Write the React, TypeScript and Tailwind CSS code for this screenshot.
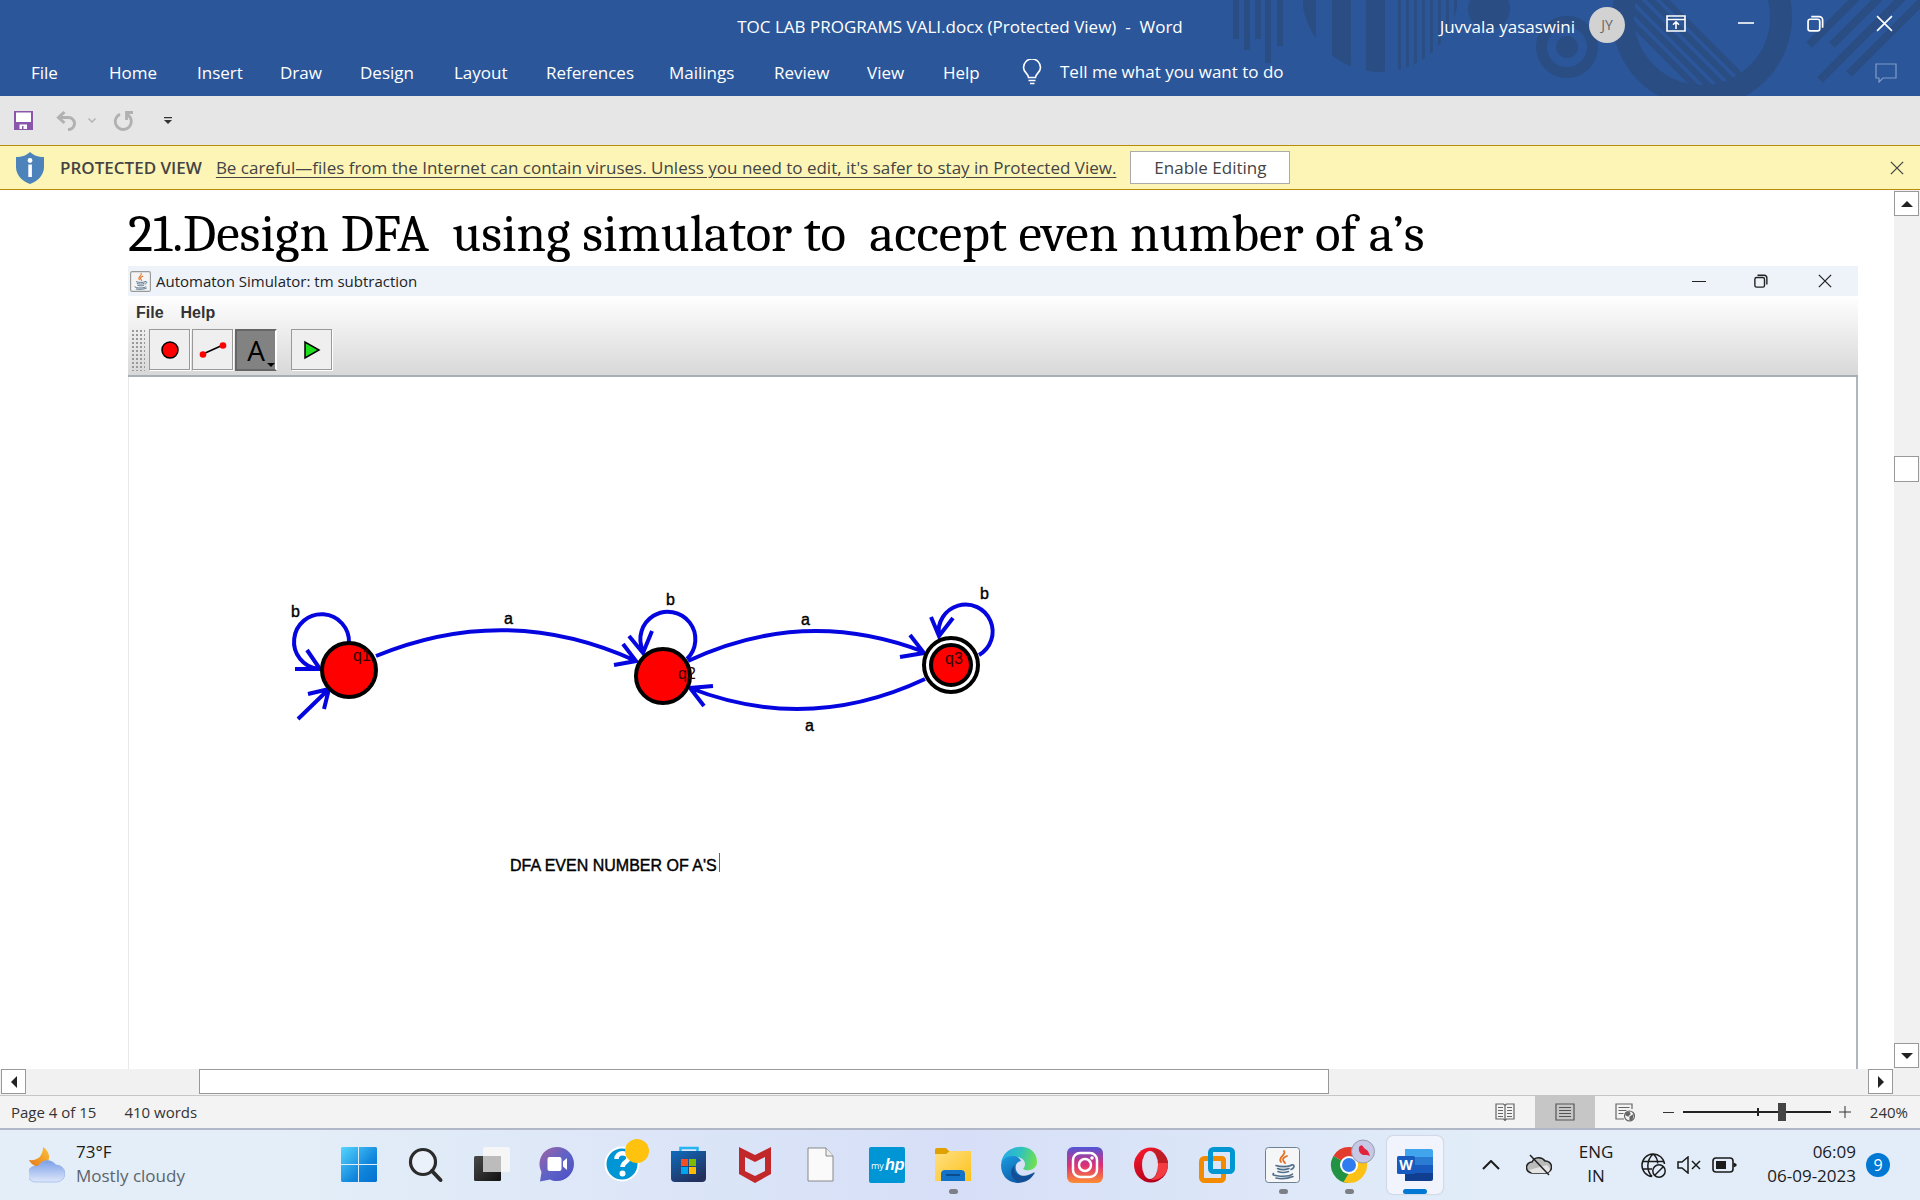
import React from "react";

const ui = "font-['Open_Sans',sans-serif]";

const menu: [string, string][] = [
  ["File", "w-[78px]"],
  ["Home", "w-[88px]"],
  ["Insert", "w-[83px]"],
  ["Draw", "w-[80px]"],
  ["Design", "w-[94px]"],
  ["Layout", "w-[92px]"],
  ["References", "w-[123px]"],
  ["Mailings", "w-[105px]"],
  ["Review", "w-[93px]"],
  ["View", "w-[76px]"],
  ["Help", "w-[79px]"],
];

function HeaderArt() {
  const bars: [number, number][] = [[53, 39], [64, 50], [75, 39], [85, 63], [97, 46]];
  const wide: [number, number][] = [[123, 13], [152, 19], [186, 19], [218, 3], [226, 3], [234, 3], [242, 3], [250, 3], [258, 3], [266, 3], [274, 3]];
  return (
    <svg className="pointer-events-none absolute top-0 right-0" width="740" height="96" viewBox="0 0 740 96" fill="#2a4d83" aria-hidden="true">
      <defs>
        <clipPath id="disc"><circle cx="200" cy="-6" r="78" /></clipPath>
        <clipPath id="hole"><circle cx="522" cy="17" r="69" /></clipPath>
      </defs>
      {bars.map(([x, h]) => <rect key={x} x={x} width="6" height={h} />)}
      <g clipPath="url(#disc)">{wide.map(([x, w]) => <rect key={x} x={x} width={w} height="96" />)}</g>
      <circle cx="309" cy="9" r="21" />
      <circle cx="387" cy="47" r="25.5" fill="none" stroke="#2a4d83" strokeWidth="11" />
      <circle cx="387" cy="47" r="11" />
      <circle cx="522" cy="17" r="79" fill="none" stroke="#2a4d83" strokeWidth="22" />
      <g clipPath="url(#hole)" stroke="#2a4d83" strokeWidth="6">
        {[435, 449, 463, 477, 491].map((x) => <path key={x} d={`M${x - 30} -24l130 130`} />)}
      </g>
      <g stroke="#2a4d83" strokeWidth="8">
        <path d="M629 45 L684 -10M652 45 L707 -10M640 80 L730 -10M669 74 L753 -10" />
      </g>
    </svg>
  );
}

const X = ({ s = 17 }: { s?: number }) => (
  <svg width={s} height={s} viewBox="0 0 16 16" stroke="currentColor" strokeWidth="1.5" fill="none"><path d="M1 1L15 15M15 1L1 15" /></svg>
);
const Restore = ({ s = 17 }: { s?: number }) => (
  <svg width={s} height={s} viewBox="0 0 16 16" stroke="currentColor" strokeWidth="1.6" fill="none"><rect x="1" y="4" width="11" height="11" rx="2" /><path d="M4 1.5h7.5a3.2 3.2 0 0 1 3.2 3.2V12" /></svg>
);

function Header() {
  return (
    <header className="relative h-24 shrink-0 bg-[#2b579a] text-[17px] text-white">
      <HeaderArt />
      <div className="relative grid h-[50px] grid-cols-[1fr_auto_1fr] items-center">
        <span />
        <h1 className="pt-1 whitespace-pre">TOC LAB PROGRAMS VALI.docx (Protected View)  -  Word</h1>
        <div className="flex items-center justify-end pr-[27px]">
          <span className="mr-[14px] pt-1">Juvvala yasaswini</span>
          <span className="mr-[41px] flex size-9 items-center justify-center rounded-full bg-[#d2d2d2] text-sm text-[#666]">JY</span>
          <button aria-label="Ribbon display options" className="mr-[52px] -mt-1">
            <svg width="20" height="17" viewBox="0 0 20 17" fill="none" stroke="white" strokeWidth="1.6"><path d="M1 1h18v15H1zM1 4.5h18M10 14V7M7 9.8l3-3 3 3" /></svg>
          </button>
          <button aria-label="Minimize" className="mr-[53px] -mt-1"><svg width="16" height="16" viewBox="0 0 16 16" stroke="white" strokeWidth="1.6"><path d="M0 8h16" /></svg></button>
          <button aria-label="Restore" className="mr-[52px] -mt-1"><Restore /></button>
          <button aria-label="Close" className="-mt-1"><X /></button>
        </div>
      </div>
      <nav className="relative flex h-[46px] items-center pl-[31px]">
        {menu.map(([m, w]) => <button key={m} className={`text-left ${w}`}>{m}</button>)}
        <button className="flex items-center gap-[18px] pb-[2px]">
          <svg width="20" height="26" viewBox="0 0 20 26" fill="none" stroke="white" strokeWidth="1.6"><path d="M6.5 18.5c0-4-5-5-5-10a8.3 8.3 0 0 1 17 0c0 5-5 6-5 10zM6.5 21.5h7M8 24.5h4.5" /></svg>
          Tell me what you want to do
        </button>
        <button aria-label="Comments" className="mr-[23px] ml-auto">
          <svg width="22" height="20" viewBox="0 0 22 20" fill="none" stroke="#7f9cc8" strokeWidth="1.2"><path d="M1 1h20v14H8l-4 4v-4H1z" /></svg>
        </button>
      </nav>
    </header>
  );
}

function QuickAccess() {
  return (
    <div className="flex h-[49px] shrink-0 items-center bg-[#e6e6e6] pl-[14px]">
      <button aria-label="Save"><svg width="19" height="19" viewBox="0 0 19 19"><path d="M0 0h19v19H0z" fill="#8a56ac" /><path d="M2 1.5h15v9.500H2zM5.500 13.500h7.500V18H9.500v-3H8v3H5.500z" fill="white" /></svg></button>
      <button aria-label="Undo" className="ml-[23px]"><svg width="22" height="20" viewBox="0 0 22 20" fill="none" stroke="#b1b1b1" strokeWidth="3"><path d="M8.500 1L2.500 6.500l6 5.500M3 6.500h9.500a6 6 0 0 1 0 12h-0.500" /></svg></button>
      <button aria-label="Undo history" className="ml-[10px]"><svg width="8" height="5" viewBox="0 0 8 5" fill="none" stroke="#b1b1b1" strokeWidth="1.400"><path d="M.5 .5L4 4 7.500 .5" /></svg></button>
      <button aria-label="Repeat" className="ml-[17px]"><svg width="21" height="20" viewBox="0 0 21 20" fill="none" stroke="#b1b1b1" strokeWidth="2.800"><path d="M7 3.200a8 8 0 1 0 7.500 .5M20 1.500h-6.500V9" /></svg></button>
      <button aria-label="Customize quick access toolbar" className="ml-[30px]"><svg width="8" height="7" viewBox="0 0 8 7" fill="#333"><path d="M0 0h8v1.300H0zM0 3h8L4 7z" /></svg></button>
    </div>
  );
}

function ProtectedBar() {
  return (
    <div className="flex h-[45px] shrink-0 items-center border-y border-[#b98b0b] bg-[#fcf5b5] text-[17px] text-[#444]">
      <svg className="ml-4" width="28" height="32" viewBox="0 0 28 32"><path d="M14 0C11 3 6 5 0 5v10c0 8 6 14 14 17 8-3 14-9 14-17V5C22 5 17 3 14 0z" fill="#4d83bb" /><circle cx="14" cy="8.500" r="2.400" fill="white" /><path d="M12.300 12.500h3.600V25h-3.600z" fill="white" /></svg>
      <strong className="ml-4 font-semibold">PROTECTED VIEW</strong>
      <a href="#protected" className="ml-[14px] underline underline-offset-[3px]">Be careful—files from the Internet can contain viruses. Unless you need to edit, it's safer to stay in Protected View.</a>
      <button className="ml-[14px] h-[33px] w-40 border border-[#ababab] bg-white">Enable Editing</button>
      <button aria-label="Close message bar" className="mr-4 ml-auto"><X s={14} /></button>
    </div>
  );
}

function JavaCup() {
  return (
    <g fill="none" strokeLinecap="round">
      <path d="M19 4c3 4-7 6-3 11M22 9c-5 2-5 4-2 7" stroke="#e76f1f" strokeWidth="1.800" />
      <path d="M11 18.500c4 1.500 11 1.500 15 0M12.500 21.500c3 1.300 8 1.300 11.500 0M13 24.500c3 1.300 7 1.300 10.500 0M26 18c4-1 4 3 0 4.500M8.500 26.500c-4 3 16 4 19 .5M11 31c5 1 12 .5 17-1.500" stroke="#52708c" strokeWidth="1.600" />
    </g>
  );
}

function Diagram() {
  return (
    <svg className="block shrink-0" width="900" height="520" viewBox="129 377 900 520" fontFamily="'Liberation Sans', sans-serif" fontSize="16">
      <g fill="none" stroke="#0505e0" strokeWidth="4">
        <path d="M349 643A27.500 27.500 0 1 0 318 669M295 669h25L307 650" />
        <path d="M298 719L329 689M308 694l21-5-5 20" />
        <path d="M376 656Q507 602 636 661M614 665l22-4-13-17" />
        <path d="M687 659A27.500 27.500 0 1 0 643 651M629 636l14 17 9-22" />
        <path d="M688 661Q805 606 924 652M900 657l24-4-14-18" />
        <path d="M925 679Q808 734 690 688M713 686l-23 2 14 18" />
        <path d="M979 655A27 27 0 1 0 939 636M931 617l8 19 14-18" />
      </g>
      <g stroke="black" strokeWidth="4">
        <circle cx="349" cy="670" r="27" fill="red" />
        <circle cx="663" cy="676" r="27" fill="red" />
        <circle cx="951" cy="665" r="27" fill="white" />
        <circle cx="951" cy="665" r="20" fill="red" />
      </g>
      <g stroke="black" strokeWidth=".4">
        <text x="291" y="617">b</text><text x="504" y="624">a</text><text x="666" y="605">b</text>
        <text x="801" y="625">a</text><text x="805" y="731">a</text><text x="980" y="599">b</text>
        <text x="510" y="871">DFA EVEN NUMBER OF A'S</text>
      </g>
      <g fill="#300"><text x="353" y="661">q1</text><text x="678" y="679">q2</text><text x="945" y="664">q3</text></g>
      <path d="M719.500 853v19" stroke="#666" />
    </svg>
  );
}

function Simulator() {
  const tool = "flex size-[41px] items-center justify-center border border-[#999] bg-[#efefef] shadow-[1px_1px_0_white]";
  return (
    <section className="flex min-h-0 flex-1 flex-col">
      <div className="flex h-[30px] shrink-0 items-center bg-[#eef3fa] pl-[2px] text-[#222]">
        <svg width="21" height="21" viewBox="0 0 36 36"><rect x="1" y="1" width="34" height="34" rx="3" fill="#f4f4f4" stroke="#999" strokeWidth="2" /><JavaCup /></svg>
        <h3 className="ml-[5px] text-[15px]">Automaton Simulator: tm subtraction</h3>
        <div className="ml-auto flex items-center pr-[26px]">
          <button aria-label="Minimize simulator" className="mr-12"><svg width="14" height="14" viewBox="0 0 14 14" stroke="currentColor"><path d="M0 7.500h14" /></svg></button>
          <button aria-label="Restore simulator" className="mr-[50px]"><Restore s={14} /></button>
          <button aria-label="Close simulator"><X s={14} /></button>
        </div>
      </div>
      <div className="shrink-0 border-b-2 border-[#a9aeb4] bg-linear-to-b from-white to-[#d8d8d8] font-['Liberation_Sans',sans-serif]">
        <div className="flex h-[33px] items-center gap-[17px] pl-2 text-base font-bold text-[#333]"><button>File</button><button>Help</button></div>
        <div className="flex h-[46px] items-start pl-[3px]">
          <div className="mr-1 h-[42px] w-[14px] bg-[radial-gradient(#999_1px,transparent_1px)] bg-size-[4px_4px]" />
          <button aria-label="State tool" className={`${tool} mr-[2px]`}><svg width="20" height="20" viewBox="0 0 20 20"><circle cx="10" cy="10" r="8" fill="red" stroke="black" strokeWidth="1.500" /></svg></button>
          <button aria-label="Transition tool" className={`${tool} mr-[2px]`}><svg width="28" height="18" viewBox="0 0 28 18"><path d="M4 13L24 4" stroke="black" strokeWidth="1.500" /><circle cx="4" cy="13.500" r="3.300" fill="red" /><circle cx="24" cy="4.500" r="3.300" fill="red" /></svg></button>
          <button className="relative flex size-[42px] items-center justify-center border-2 border-[#666] border-r-white bg-[#828282] font-['Open_Sans',sans-serif] text-[28px] text-black">A
            <svg className="absolute right-0 bottom-[2px]" width="8" height="4" viewBox="0 0 8 4"><path d="M0 0h8L4 4z" /></svg>
          </button>
          <button aria-label="Run" className={`${tool} ml-[14px]`}><svg width="18" height="20" viewBox="0 0 18 20"><path d="M2 2v16l14-8z" fill="#1de01d" stroke="black" strokeWidth="1.500" /></svg></button>
        </div>
      </div>
      <div className="min-h-0 flex-1 overflow-hidden border-r-2 border-l border-r-[#b0b6be] border-l-[#e8e8e8]"><Diagram /></div>
    </section>
  );
}

const arrowBtn = "flex h-[25px] w-[25px] shrink-0 items-center justify-center border border-[#999] bg-white";
const Tri = ({ d }: { d: string }) => <svg width="12" height="12" viewBox="0 0 12 12" fill="#222"><path d={d} /></svg>;

function DocumentArea() {
  return (
    <main className="flex min-h-0 flex-1 bg-white">
      <article className="flex min-w-0 flex-1 flex-col pr-9 pl-32">
        <h2 className="h-[76px] shrink-0 pt-[6px] font-[Cambria,'Liberation_Serif',serif] text-[53px] leading-[76px] whitespace-pre text-black">21.Design DFA  using simulator to  accept even number of a’s</h2>
        <Simulator />
      </article>
      <div className="flex w-[26px] flex-col bg-[#f1f1f1] pt-px">
        <button aria-label="Scroll up" className={arrowBtn}><Tri d="M0 9L6 3l6 6z" /></button>
        <button aria-label="Vertical scroll position" className="mt-[240px] h-[26px] w-[25px] border border-[#999] bg-white" />
        <button aria-label="Scroll down" className={`${arrowBtn} mt-auto mb-px`}><Tri d="M0 3L6 9l6-6z" /></button>
      </div>
    </main>
  );
}

function BottomBars() {
  return (
    <>
      <div className="flex h-[26px] shrink-0 bg-[#f1f1f1] pl-px">
        <button aria-label="Scroll left" className={arrowBtn}><Tri d="M9 0L3 6l6 6z" /></button>
        <div className="grid flex-1 grid-cols-[173fr_1130fr_539fr]">
          <button aria-label="Horizontal scroll position" className="col-start-2 h-[25px] border border-[#999] bg-white" />
        </div>
        <button aria-label="Scroll right" className={`${arrowBtn} mr-[27px]`}><Tri d="M3 0L9 6l-6 6z" /></button>
      </div>
      <footer className="flex h-[35px] shrink-0 items-center border-t border-b-2 border-t-[#c6c6c6] border-b-[#b0b7c6] bg-[#f3f3f3] pr-[12px] pl-[11px] text-[15px] text-[#333]">
        <span>Page 4 of 15</span>
        <span className="ml-[28px]">410 words</span>
        <div className="ml-auto flex h-full items-center">
          <button aria-label="Read mode" className="flex h-full w-[60px] items-center justify-center"><svg width="20" height="18" viewBox="0 0 20 18" fill="none" stroke="#666" strokeWidth="1.200"><path d="M10 2.500L8.500 1H1v15h7.500L10 17.500 11.500 16H19V1h-7.500zM10 2v16M3 4.500h5M3 7.500h5M3 10.500h5M3 13.500h5M12 4.500h5M12 7.500h5M12 10.500h5M12 13.500h5" /></svg></button>
          <button aria-label="Print layout" className="flex h-full w-[60px] items-center justify-center bg-[#c6c6c6]"><svg width="20" height="18" viewBox="0 0 20 18" fill="none" stroke="#555" strokeWidth="1.200"><path d="M1 1h18v16H1zM4 4.500h12M4 7.500h12M4 10.500h12M4 13.500h12" /></svg></button>
          <button aria-label="Web layout" className="flex h-full w-[60px] items-center justify-center"><svg width="20" height="19" viewBox="0 0 20 19" fill="none" stroke="#666" strokeWidth="1.200"><path d="M17 6V1H1v15h8M3.500 4.500h11M3.500 7.500h8M3.500 10.500h5" /><circle cx="14.500" cy="13" r="5" /><path d="M11 10l3-1 1 2-2 2-2-1zM15 14l3-2-1 4-2 1z" fill="#666" /></svg></button>
          <button aria-label="Zoom out" className="ml-2"><svg width="11" height="11" viewBox="0 0 11 11" stroke="#333"><path d="M0 5.500h11" /></svg></button>
          <div className="relative ml-[9px] flex h-5 w-[148px] items-center">
            <span className="absolute left-1/2 h-2 w-[2px] bg-[#222]" />
            <input aria-label="Zoom" type="range" min="0" max="100" defaultValue="68" className="relative h-[18px] w-full appearance-none bg-transparent [&::-webkit-slider-runnable-track]:h-[2px] [&::-webkit-slider-runnable-track]:bg-[#222] [&::-webkit-slider-thumb]:-mt-2 [&::-webkit-slider-thumb]:h-[18px] [&::-webkit-slider-thumb]:w-2 [&::-webkit-slider-thumb]:appearance-none [&::-webkit-slider-thumb]:bg-[#444]" />
          </div>
          <button aria-label="Zoom in" className="ml-2"><svg width="12" height="12" viewBox="0 0 12 12" stroke="#333"><path d="M0 6h12M6 0v12" /></svg></button>
          <button className="ml-4 w-[41px] text-right">240%</button>
        </div>
      </footer>
    </>
  );
}

const S = ({ children }: { children: React.ReactNode }) => <svg width="36" height="36" viewBox="0 0 36 36" className="overflow-visible">{children}</svg>;

function Grad({ id, a, b, c, d = "0 0 1 1" }: { id: string; a: string; b: string; c?: string; d?: string }) {
  const [x1, y1, x2, y2] = d.split(" ");
  return <linearGradient id={id} x1={x1} y1={y1} x2={x2} y2={y2}><stop offset="0" stopColor={a} />{c && <stop offset=".5" stopColor={c} />}<stop offset="1" stopColor={b} /></linearGradient>;
}

const apps: { name: string; icon: React.ReactNode; open?: boolean; active?: boolean }[] = [
  { name: "Start", icon: <S><defs><linearGradient id="win" gradientUnits="userSpaceOnUse" x1="0" y1="0" x2="36" y2="36"><stop stopColor="#55d5ff" /><stop offset=".6" stopColor="#1287dc" /><stop offset="1" stopColor="#0070d0" /></linearGradient></defs><path d="M1 0h16v17H0V1zM18 0h17l1 1v16H18zM0 18h17v17H1l-1-1zM18 18h18v16l-1 1H18z" fill="url(#win)" /></S> },
  { name: "Search", icon: <S><circle cx="16" cy="15" r="12.500" fill="#ffffff55" stroke="#2b2b2b" strokeWidth="3.200" /><path d="M25 24l8.500 9" stroke="#2b2b2b" strokeWidth="4" strokeLinecap="round" /></S> },
  { name: "Task view", icon: <S><defs><Grad id="tv" a="#4a4a4a" b="#111" /></defs><rect x="1" y="9" width="27" height="25" rx="1.500" fill="url(#tv)" /><rect x="10" y="0" width="27" height="25" rx="1.500" fill="#f6f6f6" /><path d="M10 9h18v16H10z" fill="#bcbcbc" /></S> },
  { name: "Chat", icon: <S><defs><Grad id="chat" a="#a263a3" b="#4a4ec4" c="#5f62c6" d="0 0 1 1" /></defs><path d="M18 0a17 17 0 0 1 0 34c-3 0-5-.5-7-1.500L1 34.500 2.500 25A17 17 0 0 1 18 0z" fill="url(#chat)" /><rect x="8.500" y="10" width="14" height="14" rx="2" fill="white" /><path d="M24 14.500l4-3.500v12l-4-3.500z" fill="white" /></S> },
  { name: "Get help", icon: <S><circle cx="17" cy="17" r="16.500" fill="#0096d6" stroke="white" strokeWidth="2" /><path d="M11.500 12c0-8 12-7 12-1 0 4-6 4-6 9" fill="none" stroke="white" strokeWidth="4.500" /><circle cx="17.500" cy="26.500" r="3" fill="white" /><circle cx="32" cy="4" r="12" fill="#ffc20e" /></S> },
  { name: "Microsoft Store", icon: <S><defs><Grad id="store" a="#0f6cbd" b="#23305e" d="0 0 .6 1" /></defs><path d="M9.500 7V1h17v6" fill="none" stroke="#27b4f0" strokeWidth="2.500" /><path d="M0 4h35v27q0 4-4 4H4q-4 0-4-4z" fill="url(#store)" /><path d="M10 12h7v7h-7z" fill="#f25022" /><path d="M18 12h7v7h-7z" fill="#7fba00" /><path d="M10 20h7v7h-7z" fill="#00a4ef" /><path d="M18 20h7v7h-7z" fill="#ffb900" /></S> },
  { name: "McAfee", icon: <S><path d="M2 0l16 8L34 0v27l-16 9-16-9zM8 10v14l10 5 10-5V10l-10 5z" fill="#c01818" fillRule="evenodd" opacity=".92" /></S> },
  { name: "Document", icon: <S><path d="M5 1h18l7 8v25H5z" fill="#fafafa" stroke="#888" /><path d="M23 1v8h7" fill="#eee" stroke="#888" /></S> },
  { name: "myHP", icon: <S><rect width="36" height="36" rx="2" fill="#0096d6" /><text x="2" y="22" fill="white" fontSize="9" fontFamily="Open Sans, sans-serif">my</text><text x="16" y="23" fill="white" fontSize="16" fontWeight="bold" fontStyle="italic" fontFamily="Liberation Sans, sans-serif">hp</text></S> },
  { name: "File Explorer", open: true, icon: <S><defs><Grad id="fold" a="#ffe083" b="#fcc21b" /></defs><path d="M0 3q0-2 2-2h9l4 4h21v10H0z" fill="#dfa000" /><path d="M0 7h11l4-3h21v30H0z" fill="url(#fold)" /><path d="M6 34v-7q0-4 4-4h16q4 0 4 4v7z" fill="#1273c9" /><path d="M11 28h14" stroke="#0a4c8c" strokeWidth="2" /></S> },
  { name: "Edge", icon: <S><defs><Grad id="e1" a="#28a9e8" b="#70e04f" c="#2fc2c0" d="0 .3 1 .5" /><Grad id="e2" a="#1b9de2" b="#0c59a4" d="0 0 .6 1" /></defs><path d="M0 17C2-5 36-6 36 15c0 8-10 10-14 7 5-6 0-12-7-12C7 10 1 13 0 17z" fill="url(#e1)" /><path d="M0 18C1 8 17 6 20 14c-5 1-6 5-5 9 2 6 9 8 15 5-4 6-9 8-14 8C6 35 0 28 0 18z" fill="url(#e2)" /><path d="M14 18c-3 8 4 15 18 8 2-1 2 0 1 1-4 7-11 9-15 8-9-3-10-13-4-17z" fill="#124f96" /></S> },
  { name: "Instagram", icon: <S><defs><Grad id="ig" a="#5156d8" b="#fd8d32" c="#dc3076" d=".3 0 .3 1" /></defs><rect width="36" height="36" rx="6" fill="url(#ig)" /><g fill="none" stroke="white" strokeWidth="2.500"><rect x="6" y="6" width="24" height="24" rx="7" /><circle cx="18" cy="18" r="6" /></g><circle cx="25" cy="11" r="1.800" fill="white" /></S> },
  { name: "Opera", icon: <S><defs><Grad id="op" a="#ff1b2d" b="#b0001c" d="0 0 .5 1" /></defs><ellipse cx="18" cy="18" rx="17" ry="17.500" fill="url(#op)" /><path d="M18 2c8-1 17 6 17 16S26 34 18 33c5-2 7-8 7-15S22 4 18 2z" fill="#f43b42" /><path d="M18 2c8-1 17 6 17 14L25 16C24 9 22 4 18 2z" fill="#a50f18" opacity=".65" /><ellipse cx="17" cy="18" rx="8" ry="14" fill="#dbe0f3" /></S> },
  { name: "VMware", icon: <S><rect x="2.500" y="11.500" width="22" height="22" rx="3" fill="none" stroke="#f38b00" strokeWidth="5" /><rect x="11.500" y="2.500" width="22" height="22" rx="3" fill="none" stroke="#0095d3" strokeWidth="5" /><path d="M14 11.500h8.500q2 0 2 2V21" fill="none" stroke="#f38b00" strokeWidth="5" /></S> },
  { name: "Java", open: true, icon: <S><rect x=".5" y=".5" width="34" height="35" rx="3" fill="#f4f6f7" stroke="#6e8294" /><JavaCup /></S> },
  { name: "Chrome", open: true, icon: <S><path d="M18 18L2.400 9A18 18 0 0 1 33.600 9z" fill="#e33b2e" /><path d="M18 18l15.600-9A18 18 0 0 1 18 36z" fill="#fbc116" /><path d="M18 18v18A18 18 0 0 1 2.400 9z" fill="#229342" /><path d="M18 26l-5.500 9A18 18 0 0 0 18 36l7-14z" fill="#fbc116" /><circle cx="18" cy="18" r="9" fill="white" /><circle cx="18" cy="18" r="7" fill="#2f7cf0" /><circle cx="32" cy="4.500" r="11.500" fill="#c6c8e6" stroke="#969cae" /><path d="M28 0q3-4 5 1l4 3 2 5-3-1-4 0q-5-2-4-8z" fill="#e3223d" /></S> },
  { name: "Word", active: true, icon: <S><path d="M8 2h26q2 0 2 2v6H8z" fill="#41a5ee" /><path d="M8 10h28v8H8z" fill="#2b7cd3" /><path d="M8 18h28v8H8z" fill="#185abd" /><path d="M8 26h28v6q0 2-2 2H8z" fill="#103f91" /><rect x="0" y="9" width="18" height="18" rx="1.500" fill="#185abd" /><text x="9" y="23" textAnchor="middle" fill="white" fontSize="14" fontWeight="bold" fontFamily="Open Sans, sans-serif">W</text></S> },
];

function Taskbar() {
  return (
    <div className="flex h-[70px] shrink-0 items-center bg-linear-to-r from-[#e3eef8] from-15% via-[#d6dff7] via-50% to-[#e2edf9] to-78% text-[17px] leading-6 text-[#1b1b1b]">
      <button className="flex flex-1 items-center gap-[11px] pl-[29px] text-left">
        <svg width="36" height="36" viewBox="0 0 36 36"><defs><Grad id="moon" a="#f8c43c" b="#e97818" d="1 0 0 1" /><Grad id="cloud" a="#7b9fe6" b="#dfe8fb" d="0 0 0 1" /></defs><path d="M14 0c8 5 8 15 1 18-6 3-12 1-15-5 8 1 14-3 14-13z" fill="url(#moon)" /><path d="M8 35a8 8 0 1 1 1-15.500A10.500 10.500 0 0 1 27 18a8.500 8.500 0 0 1 1 17z" fill="url(#cloud)" stroke="#8fabea" strokeWidth=".6" /></svg>
        <span className="pb-[2px]">73°F<br /><span className="text-[#5c646c]">Mostly cloudy</span></span>
      </button>
      <nav aria-label="Pinned apps" className="flex">
        {apps.map((a) => (
          <button key={a.name} aria-label={a.name} className="flex w-[66px] justify-center">
            <span className={`relative flex h-[58px] w-[56px] items-center justify-center rounded-md ${a.active ? "bg-[#f1f4fc] shadow-[0_0_2px_#aab]" : ""}`}>
              {a.icon}
              {a.open && <span className="absolute bottom-0 h-[5px] w-[9px] rounded-full bg-[#7d7f86]" />}
              {a.active && <span className="absolute bottom-0 h-[5px] w-6 rounded-full bg-[#0078d4]" />}
            </span>
          </button>
        ))}
      </nav>
      <div className="flex w-[472px] items-center pr-[30px] pl-[34px]">
        <button aria-label="Show hidden icons"><svg width="18" height="10" viewBox="0 0 18 10" fill="none" stroke="currentColor" strokeWidth="2"><path d="M1 9l8-8 8 8" /></svg></button>
        <button aria-label="OneDrive" className="ml-[26px]"><svg width="26" height="22" viewBox="0 0 26 22"><path d="M6 19a5.500 5.500 0 0 1 0-11 7.500 7.500 0 0 1 13-1 6 6 0 0 1 1 12z" fill="#bbb" stroke="#222" strokeWidth="1.500" /><path d="M3 16l18-5 3 4q-1 4-4 4H6z" fill="#e4e4e4" /><path d="M4 1l19 20" stroke="#222" strokeWidth="1.500" /></svg></button>
        <button className="ml-[26px] w-[36px] pb-[2px] text-center">ENG<br />IN</button>
        <button aria-label="Network, volume and battery" className="ml-[27px] flex items-center gap-[11px]">
          <svg width="25" height="25" viewBox="0 0 25 25" fill="none" stroke="currentColor" strokeWidth="1.500"><path d="M23.500 11A11.300 11.300 0 1 0 11 23.500M2 8.500h21M2 16h9M12.200 1c-7 6-7 17-1 22.500M12.200 1q4.500 4 4.500 9.500" /><circle cx="18" cy="18" r="6.200" /><path d="M13.500 22.500l9-9" /></svg>
          <svg width="24" height="18" viewBox="0 0 24 18" fill="none" stroke="currentColor" strokeWidth="1.500"><path d="M1 6h4l6-5v16l-6-5H1zM15 5l8 8M23 5l-8 8" /></svg>
          <svg width="25" height="16" viewBox="0 0 25 16"><rect x="1" y="1" width="20" height="14" rx="3" fill="none" stroke="currentColor" strokeWidth="1.600" /><rect x="4" y="4" width="10" height="8" fill="currentColor" /><path d="M21.500 5.500l3 1.500v2l-3 1.500z" fill="currentColor" /></svg>
        </button>
        <button className="ml-auto pb-[2px] text-right">06:09<br />06-09-2023</button>
        <button aria-label="9 notifications" className="ml-[10px] flex size-6 items-center justify-center rounded-full bg-[#0078d4] text-base text-white">9</button>
      </div>
    </div>
  );
}

export default function App() {
  return (
    <div className={`flex h-screen flex-col overflow-hidden ${ui}`}>
      <Header />
      <QuickAccess />
      <ProtectedBar />
      <DocumentArea />
      <BottomBars />
      <Taskbar />
    </div>
  );
}
